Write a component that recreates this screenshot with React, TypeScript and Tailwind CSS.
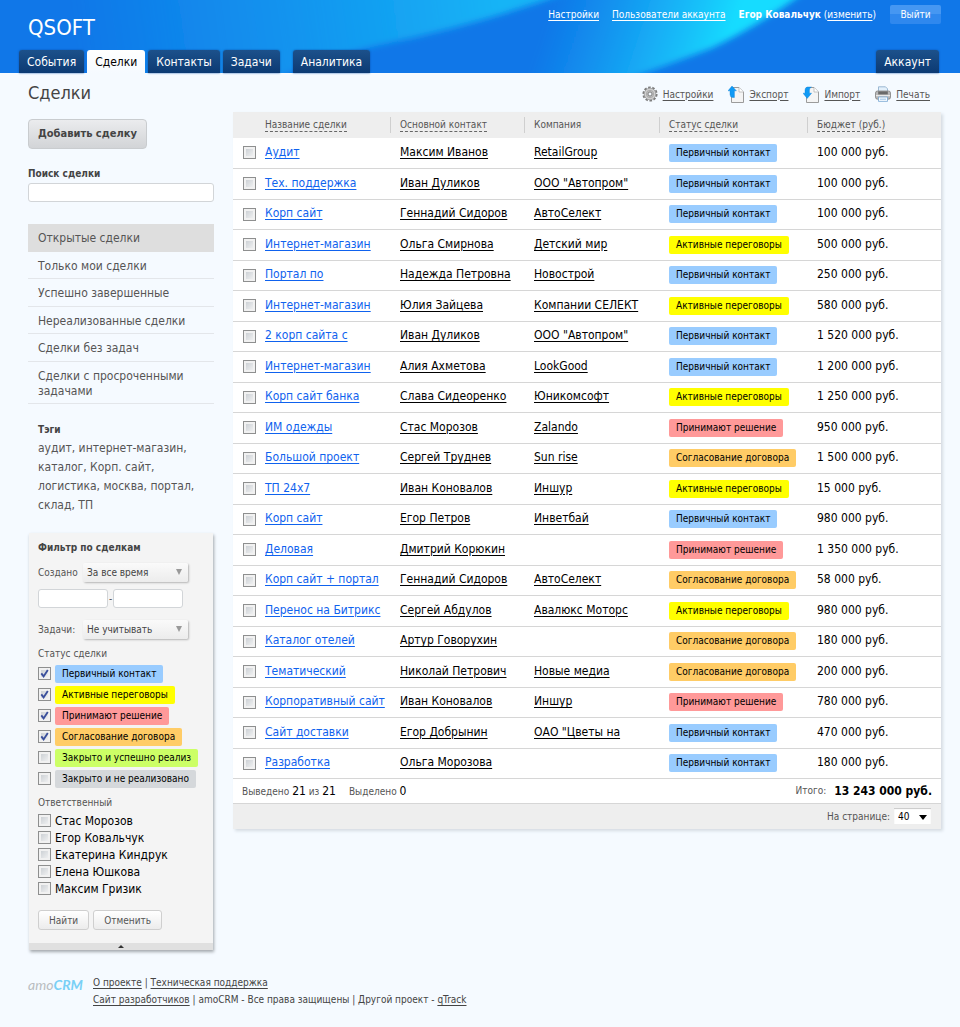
import React from "react";
import clsx from "clsx";

type Status = "first" | "talks" | "decide" | "contract" | "won" | "lost";

interface Deal {
  name: string;
  contact: string;
  company: string;
  status: Status;
  budget: string;
}

const STATUS: Record<Status, { label: string; bg: string }> = {
  first: { label: "Первичный контакт", bg: "bg-[#99ccff]" },
  talks: { label: "Активные переговоры", bg: "bg-[#ffff00]" },
  decide: { label: "Принимают решение", bg: "bg-[#ff9999]" },
  contract: { label: "Согласование договора", bg: "bg-[#ffcc66]" },
  won: { label: "Закрыто и успешно реализ", bg: "bg-[#ccff66]" },
  lost: { label: "Закрыто и не реализовано", bg: "bg-[#d5d8db]" },
};

const DEALS: Deal[] = [
  { name: "Аудит", contact: "Максим Иванов", company: "RetailGroup", status: "first", budget: "100 000" },
  { name: "Тех. поддержка", contact: "Иван Дуликов", company: 'ООО "Автопром"', status: "first", budget: "100 000" },
  { name: "Корп сайт", contact: "Геннадий Сидоров", company: "АвтоСелект", status: "first", budget: "100 000" },
  { name: "Интернет-магазин", contact: "Ольга Смирнова", company: "Детский мир", status: "talks", budget: "500 000" },
  { name: "Портал по", contact: "Надежда Петровна", company: "Новострой", status: "first", budget: "250 000" },
  { name: "Интернет-магазин", contact: "Юлия Зайцева", company: "Компании СЕЛЕКТ", status: "talks", budget: "580 000" },
  { name: "2 корп сайта с", contact: "Иван Дуликов", company: 'ООО "Автопром"', status: "first", budget: "1 520 000" },
  { name: "Интернет-магазин", contact: "Алия Ахметова", company: "LookGood", status: "first", budget: "1 200 000" },
  { name: "Корп сайт банка", contact: "Слава Сидеоренко", company: "Юникомсофт", status: "talks", budget: "1 250 000" },
  { name: "ИМ одежды", contact: "Стас Морозов", company: "Zalando", status: "decide", budget: "950 000" },
  { name: "Большой проект", contact: "Сергей Труднев", company: "Sun rise", status: "contract", budget: "1 500 000" },
  { name: "ТП 24x7", contact: "Иван Коновалов", company: "Иншур", status: "talks", budget: "15 000" },
  { name: "Корп сайт", contact: "Егор Петров", company: "Инветбай", status: "first", budget: "980 000" },
  { name: "Деловая", contact: "Дмитрий Корюкин", company: "", status: "decide", budget: "1 350 000" },
  { name: "Корп сайт + портал", contact: "Геннадий Сидоров", company: "АвтоСелект", status: "contract", budget: "58 000" },
  { name: "Перенос на Битрикс", contact: "Сергей Абдулов", company: "Авалюкс Моторс", status: "talks", budget: "980 000" },
  { name: "Каталог отелей", contact: "Артур Говорухин", company: "", status: "contract", budget: "180 000" },
  { name: "Тематический", contact: "Николай Петрович", company: "Новые медиа", status: "contract", budget: "200 000" },
  { name: "Корпоративный сайт", contact: "Иван Коновалов", company: "Иншур", status: "decide", budget: "780 000" },
  { name: "Сайт доставки", contact: "Егор Добрынин", company: 'ОАО "Цветы на', status: "first", budget: "470 000" },
  { name: "Разработка", contact: "Ольга Морозова", company: "", status: "first", budget: "180 000" },
];

const VIEWS = [
  "Открытые сделки",
  "Только мои сделки",
  "Успешно завершенные",
  "Нереализованные сделки",
  "Сделки без задач",
  "Сделки с просроченными задачами",
];

const FILTER_STATUSES: Status[] = ["first", "talks", "decide", "contract", "won", "lost"];
const MANAGERS = ["Стас Морозов", "Егор Ковальчук", "Екатерина Киндрук", "Елена Юшкова", "Максим Гризик"];

function Badge({ status }: { status: Status }) {
  const s = STATUS[status];
  return (
    <span className={clsx("inline-block h-[18px] rounded-xs px-[7px] text-[10px] leading-[18px] whitespace-nowrap text-black", s.bg)}>
      {s.label}
    </span>
  );
}

function Checkbox({ id, label, checked }: { id: string; label?: string; checked?: boolean }) {
  return (
    <span className="relative block size-[13px] shrink-0">
      <input
        id={id}
        type="checkbox"
        aria-label={label}
        defaultChecked={checked}
        className="peer block size-[13px] appearance-none border border-[#8e8f8f] bg-linear-to-br from-[#c4c9ce] to-[#f8f8f8] shadow-[inset_0_0_0_2px_#f1f1f1]"
      />
      <svg viewBox="0 0 13 13" className="pointer-events-none absolute inset-0 hidden size-[13px] peer-checked:block">
        <path d="M3.3 6.4 5.6 9.4 9.8 3" fill="none" stroke="#3a4f9c" strokeWidth="1.9" />
      </svg>
    </span>
  );
}

/* Header */

const tabBase = "flex h-[23px] items-center rounded-t-[3px] px-2 pt-px text-xs";
const tabDark = "bg-linear-to-b from-[#1c518b] to-[#0c3a73] text-white shadow-[0_0_2px_#0a4fa6]";

function Swoosh() {
  return (
    <svg className="absolute inset-0 h-full w-full" viewBox="0 0 960 73" preserveAspectRatio="none" aria-hidden="true">
      <defs>
        <linearGradient id="wide" gradientUnits="userSpaceOnUse" x1="80" y1="60" x2="500" y2="0">
          <stop offset="0" stopColor="#16b4f6" stopOpacity="0" />
          <stop offset="0.6" stopColor="#16b0f5" stopOpacity="0.6" />
          <stop offset="1" stopColor="#16b4f6" />
        </linearGradient>
        <linearGradient id="beam" gradientUnits="userSpaceOnUse" x1="550" y1="10" x2="720" y2="66">
          <stop offset="0" stopColor="#18b4f8" stopOpacity="0" />
          <stop offset="0.6" stopColor="#18c0fa" stopOpacity="0.75" />
          <stop offset="1" stopColor="#18dcff" />
        </linearGradient>
        <filter id="soft" x="-5%" y="-30%" width="110%" height="160%">
          <feGaussianBlur stdDeviation="3" />
        </filter>
      </defs>
      <rect width="960" height="73" fill="#1077e8" />
      <path d="M-20-20H600Q500 20 380 45 320 58 230 96H-20Z" fill="url(#wide)" filter="url(#soft)" />
      <path d="M480-20H820Q770 20 712 48 660 68 580 96H400Z" fill="url(#beam)" filter="url(#soft)" />
    </svg>
  );
}

function Header() {
  return (
    <header className="relative bg-[#1077e8]">
      <Swoosh />
      <div className="relative flex h-[73px] flex-col justify-between pr-[19px]">
        <div className="flex justify-between pl-7 text-white">
          <a href="#" className="pt-[13px] text-[22px] leading-[30px]">QSOFT</a>
          <div className="flex items-start pt-[5px] text-[10px] leading-[19px]">
            <a href="#" className="mr-[13px] underline underline-offset-2">Настройки</a>
            <a href="#" className="mr-[13px] underline underline-offset-2">Пользователи аккаунта</a>
            <span className="mr-[14px]">
              <b>Егор Ковальчук</b> (<a href="#" className="underline underline-offset-2">изменить</a>)
            </span>
            <button className="h-[19px] w-[51px] rounded-xs bg-linear-to-b from-[#4697f2] from-50% to-[#2f88ee] to-50%">
              Выйти
            </button>
          </div>
        </div>
        <nav className="flex gap-[3px] pl-[19px]">
          <a href="#" className={clsx(tabBase, tabDark)}>События</a>
          <a href="#" className={clsx(tabBase, "bg-linear-to-b from-white to-[#f5faff] text-black")}>Сделки</a>
          <a href="#" className={clsx(tabBase, tabDark)}>Контакты</a>
          <a href="#" className={clsx(tabBase, tabDark)}>Задачи</a>
          <a href="#" className={clsx(tabBase, tabDark, "ml-[10px]")}>Аналитика</a>
          <a href="#" className={clsx(tabBase, tabDark, "mr-[2px] ml-auto")}>Аккаунт</a>
        </nav>
      </div>
    </header>
  );
}

/* Toolbar icons */

function GearIcon() {
  return (
    <svg viewBox="0 0 16 16" className="size-4">
      <circle cx="8" cy="8" r="6.7" fill="none" stroke="#7d7d7d" strokeWidth="1.8" strokeDasharray="2.6 1.61" />
      <circle cx="8" cy="8" r="5.8" fill="#cfcfcf" stroke="#8c8c8c" strokeWidth="0.7" />
      <circle cx="8" cy="8" r="3.7" fill="#bdbdbd" stroke="#a2a2a2" strokeWidth="0.7" />
      <circle cx="8" cy="8" r="2" fill="#f5faff" stroke="#777" strokeWidth="0.9" />
    </svg>
  );
}

function PageIcon({ arrow }: { arrow: "up" | "down" }) {
  return (
    <svg viewBox="0 0 16 17" className="h-[17px] w-4">
      <path d="M3.5 1.5H11L15.5 6V16.5H3.5Z" fill="#f4f4f4" stroke="#9b9b9b" />
      <path d="M11 1.5V6H15.5" fill="#fff" stroke="#b5b5b5" strokeWidth="0.8" />
      {arrow === "up" ? (
        <path d="M4 0 8.4 4.8H6.4V11.5H4.6Q2 11 2 8.4V4.8H0Z" fill="#109af5" stroke="#0c7fd6" strokeWidth="0.4" />
      ) : (
        <path d="M8.4 1H4.4Q2 1.4 2 4V7.2H0L4.2 12.4 8.6 7.2H6.4V4Q6.4 2 8.4 1Z" fill="#109af5" stroke="#0c7fd6" strokeWidth="0.4" />
      )}
    </svg>
  );
}

function PrintIcon() {
  return (
    <svg viewBox="0 0 16 16" className="size-4">
      <path d="M3.5 7V.8H10.5L12.5 2.8V7Z" fill="#e3f0fb" stroke="#88aac8" strokeWidth="0.8" />
      <rect x="0.5" y="5" width="15" height="8.2" rx="2" fill="#b9b9b9" stroke="#808080" strokeWidth="0.8" />
      <path d="M3.2 5.4H12.8V8.4H3.2Z" fill="#6a6a6a" />
      <path d="M1 9.6H15" stroke="#e9e9e9" strokeWidth="1.2" />
      <path d="M3.5 11H12.5V15.4H3.5Z" fill="#f7fbff" stroke="#77a7d2" strokeWidth="0.8" />
      <path d="M5 13.2H11" stroke="#9bc4e8" />
    </svg>
  );
}

const TOOLS = [
  { label: "Настройки", icon: <GearIcon /> },
  { label: "Экспорт", icon: <PageIcon arrow="up" /> },
  { label: "Импорт", icon: <PageIcon arrow="down" /> },
  { label: "Печать", icon: <PrintIcon /> },
];

/* Sidebar */

function FilterSelect({ id, label, option }: { id: string; label: string; option: string }) {
  return (
    <div className="flex h-5 items-center">
      <label htmlFor={id} className="w-[45px]">{label}</label>
      <span className="relative">
        <select
          id={id}
          className="block h-[19px] w-[105px] appearance-none rounded-xs bg-linear-to-b from-[#fafafa] to-[#ececec] pl-[4px] text-[10px] text-[#444] shadow-[1px_1px_2px_#b5b5b5]"
        >
          <option>{option}</option>
        </select>
        <svg viewBox="0 0 6 6" className="pointer-events-none absolute top-[6px] right-[6px] size-[6px]">
          <path d="M0 0H6L3 6Z" fill="#999" />
        </svg>
      </span>
    </div>
  );
}

const dateInput = "block h-[19px] w-[70px] rounded-[3px] border border-[#d2d5d8] bg-white px-1";
const smallButton = "h-[20px] rounded-[3px] border border-[#cfcfcf] bg-linear-to-b from-white to-[#ececec] px-[10px] text-[#555]";

function FilterPanel() {
  return (
    <form className="mr-px ml-px bg-[#f4f4f4] text-[10px] text-[#555] shadow-[1px_2px_3px_#a3a8ad]">
      <div className="px-[9px] pt-[6px] pb-[13px]">
        <h2 className="leading-[18px] font-bold text-[#444]">Фильтр по сделкам</h2>
        <div className="mt-[5px] mb-[7px]">
          <FilterSelect id="created" label="Создано" option="За все время" />
        </div>
        <div className="mb-[11px] flex items-center gap-px">
          <input aria-label="Создано с" className={dateInput} />
          -
          <input aria-label="Создано по" className={dateInput} />
        </div>
        <FilterSelect id="tasks" label="Задачи:" option="Не учитывать" />
        <fieldset>
          <legend className="pt-[6px] leading-[18px]">Статус сделки</legend>
          {FILTER_STATUSES.map((s, i) => (
            <div key={s} className="flex h-[21px] items-center gap-[4px]">
              <Checkbox id={`status-${s}`} checked={i < 4} />
              <label htmlFor={`status-${s}`} className="flex">
                <Badge status={s} />
              </label>
            </div>
          ))}
        </fieldset>
        <fieldset className="text-xs text-black">
          <legend className="pt-[5px] text-[10px] leading-[18px] text-[#555]">Ответственный</legend>
          {MANAGERS.map((m, i) => (
            <div key={m} className="flex h-[17px] items-center gap-[4px]">
              <Checkbox id={`manager-${i}`} />
              <label htmlFor={`manager-${i}`}>{m}</label>
            </div>
          ))}
        </fieldset>
        <div className="mt-[13px] flex gap-[4px]">
          <button type="button" className={smallButton}>Найти</button>
          <button type="button" className={smallButton}>Отменить</button>
        </div>
      </div>
      <button type="button" aria-label="Свернуть фильтр" className="flex h-[7px] w-full items-center justify-center bg-[#e0e0e0]">
        <svg viewBox="0 0 6 3" className="h-[3px] w-[6px]">
          <path d="M3 0 6 3H0Z" fill="#333" />
        </svg>
      </button>
    </form>
  );
}

function Sidebar() {
  return (
    <aside className="w-[186px] shrink-0 text-[#444]">
      <h1 className="text-[18px] leading-6 text-[#444]">Сделки</h1>
      <button className="mt-[14px] h-[30px] rounded-[4px] border border-[#c9cccf] bg-linear-to-b from-[#ebecee] to-[#d2d4d7] px-[9px] text-[11px] font-bold whitespace-nowrap text-[#444]">
        Добавить сделку
      </button>
      <label htmlFor="search" className="mt-4 block text-[10px] leading-[18px] font-bold">Поиск сделки</label>
      <input id="search" className="block h-[19px] w-full rounded-[3px] border border-[#d2d5d8] bg-white px-1 text-xs" />

      <ul className="mt-[22px] text-xs leading-[15px] text-[#555]">
        {VIEWS.map((v, i) => (
          <li
            key={v}
            className={clsx(
              "px-[10px] pt-[7px]",
              i === 0 ? "bg-[#dedede] pb-[6px]" : "border-b border-[#e3e6ea] odd:pb-[5px] even:pb-[4px]"
            )}
          >
            <a href="#">{v}</a>
          </li>
        ))}
      </ul>

      <div className="mt-4 mb-[18px] px-[10px] text-xs leading-[19px] text-[#555]">
        <h2 className="text-[10px] font-bold text-[#444]">Тэги</h2>
        <p>аудит, интернет-магазин, каталог, Корп. сайт, логистика, москва, портал, склад, ТП</p>
      </div>

      <FilterPanel />
    </aside>
  );
}

/* Deals table */

function HeadCell({ children, plain, first }: { children: React.ReactNode; plain?: boolean; first?: boolean }) {
  return (
    <th className="p-0 text-left font-normal">
      <div className={clsx("flex h-4 items-center", !first && "border-l border-[#cfcfcf] pl-[9px]")}>
        {plain ? (
          children
        ) : (
          <a href="#" className="border-b border-dashed border-[#666] leading-[13px]">{children}</a>
        )}
      </div>
    </th>
  );
}

const textCell = "p-0 pb-[2px] whitespace-nowrap";

function DealsTable() {
  return (
    <div className="bg-white shadow-[2px_2px_3px_#d5dce3]">
      <table className="w-full table-fixed border-collapse text-xs text-black">
        <colgroup>
          <col className="w-[32px]" />
          <col className="w-[125px]" />
          <col className="w-[134px]" />
          <col className="w-[135px]" />
          <col className="w-[148px]" />
          <col />
        </colgroup>
        <thead>
          <tr className="h-[26px] bg-[#eeeeee] text-[10px] text-[#555]">
            <td />
            <HeadCell first>Название сделки</HeadCell>
            <HeadCell>Основной контакт</HeadCell>
            <HeadCell plain>Компания</HeadCell>
            <HeadCell>Статус сделки</HeadCell>
            <HeadCell>Бюджет (руб.)</HeadCell>
          </tr>
        </thead>
        <tbody>
          {DEALS.map((d, i) => (
            <tr key={i} className="border-b border-[#d6d6d6] odd:h-[30px] even:h-[31px]">
              <td className="p-0 pl-[10px]">
                <Checkbox id={`deal-${i}`} label={d.name} />
              </td>
              <td className={textCell}>
                <a href="#" className="text-[#0f62ee] underline underline-offset-2">{d.name}</a>
              </td>
              <td className={clsx(textCell, "pl-[10px]")}>
                <a href="#" className="underline underline-offset-2">{d.contact}</a>
              </td>
              <td className={clsx(textCell, "pl-[10px]")}>
                {d.company && <a href="#" className="underline underline-offset-2">{d.company}</a>}
              </td>
              <td className="p-0 pl-[10px]">
                <div className="flex"><Badge status={d.status} /></div>
              </td>
              <td className={clsx(textCell, "pl-[10px]")}>{d.budget} руб.</td>
            </tr>
          ))}
        </tbody>
      </table>
      <div className="flex h-[25px] items-center justify-between border-b border-[#d6d6d6] px-[9px] text-[10px] text-[#555]">
        <p className="flex gap-[13px]">
          <span>Выведено <span className="text-xs text-black">21</span> из <span className="text-xs text-black">21</span></span>
          <span>Выделено <span className="text-xs text-black">0</span></span>
        </p>
        <p className="flex items-center gap-2">
          Итого: <b className="text-xs text-black">13 243 000 руб.</b>
        </p>
      </div>
      <div className="flex h-[25px] items-center justify-end gap-[4px] bg-[#eeeeee] pr-[10px] text-[10px] text-[#555]">
        <label htmlFor="per-page">На странице:</label>
        <span className="relative">
          <select id="per-page" className="block h-4 w-[37px] appearance-none bg-white pl-[4px] text-[10px] text-black shadow-[inset_0_1px_1px_#c8c8c8]">
            <option>40</option>
          </select>
          <svg viewBox="0 0 8 5" className="pointer-events-none absolute top-[7px] right-[4px] h-[5px] w-[8px]">
            <path d="M0 0H8L4 5Z" fill="#000" />
          </svg>
        </span>
      </div>
    </div>
  );
}

export default function App() {
  return (
    <div className="min-h-screen bg-[#f5faff] font-['DejaVu_Sans_Condensed','DejaVu_Sans',sans-serif]">
      <Header />
      <div className="flex items-start gap-[19px] pt-2 pr-[19px] pl-7">
        <Sidebar />
        <main className="min-w-0 flex-1">
          <div className="mb-[5px] flex h-[26px] items-center justify-end gap-[15px] pr-[11px] text-[10px] text-[#555]">
            {TOOLS.map((t) => (
              <a key={t.label} href="#" className="flex items-center gap-[5px]">
                {t.icon}
                <span className="underline underline-offset-2">{t.label}</span>
              </a>
            ))}
          </div>
          <DealsTable />
        </main>
      </div>
      <footer className="flex items-start gap-[10px] px-7 pt-6 pb-5 text-[10px] leading-[17px] text-[#444]">
        <a href="#" className="w-[55px] font-['Lato',sans-serif] text-sm leading-[22px] italic">
          <span className="text-[#b9bdc1]">amo</span>
          <span className="font-bold text-[#79d0f6]">CRM</span>
        </a>
        <div>
          <p>
            <a href="#" className="underline underline-offset-2">О проекте</a> |{" "}
            <a href="#" className="underline underline-offset-2">Техническая поддержка</a>
          </p>
          <p>
            <a href="#" className="underline underline-offset-2">Сайт разработчиков</a> | amoCRM - Все права защищены | Другой проект -{" "}
            <a href="#" className="underline underline-offset-2">qTrack</a>
          </p>
        </div>
      </footer>
    </div>
  );
}
